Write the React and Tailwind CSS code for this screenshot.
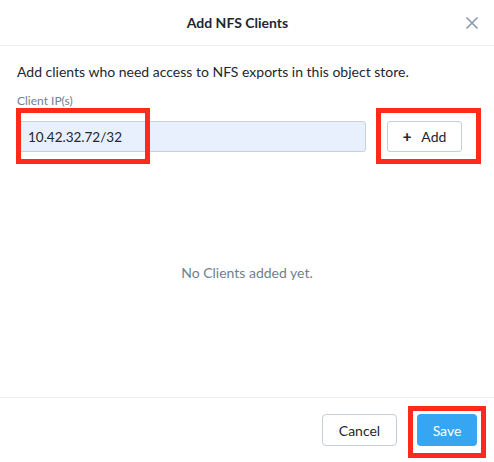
import React from "react";

const FONT = "font-['Lato','Open_Sans',sans-serif]";

function CloseIcon() {
  return (
    <svg width="12" height="12" viewBox="0 0 12 12" className="shrink-0">
      <path d="M1 1 L11 11 M11 1 L1 11" stroke="#8a9aab" strokeWidth="1.7" strokeLinecap="round" />
    </svg>
  );
}

export default function App() {
  return (
    <div className={`relative w-[494px] h-[462px] bg-white flex flex-col text-[#22272e] ${FONT}`}>
      <div className="h-[46px] shrink-0 border-b border-[#eceff2] flex items-center pr-[16px]">
        <div className="flex-1 text-center text-[14px] font-bold pl-[9px]">Add NFS Clients</div>
        <CloseIcon />
      </div>

      <div className="flex-1 flex flex-col px-[17px] pt-[17px]">
        <p className="text-[14px] leading-[18px]">Add clients who need access to NFS exports in this object store.</p>
        <label className="mt-[13px] text-[12px] leading-[14px] text-[#6f8193]">Client IP(s)</label>
        <div className="mt-[13px] flex items-center gap-[21px]">
          <input
            defaultValue="10.42.32.72/32"
            className="w-[349px] h-[31px] rounded-[3px] border border-[#c9d2db] bg-[#e8f0fe] px-[10px] text-[13.5px] text-[#22272e] outline-none"
          />
          <button className="w-[75px] h-[31px] rounded-[3px] border border-[#c6cdd5] bg-white flex items-center justify-center gap-[10px] text-[14px] text-[#22272e]">
            <span className="font-black text-[15px] leading-none">+</span>
            <span>Add</span>
          </button>
        </div>
        <div className="flex-1 flex items-center justify-center pb-[4px] text-[14px] text-[#6f7f8f]">
          No Clients added yet.
        </div>
      </div>

      <div className="h-[65px] shrink-0 border-t border-[#eceff2] flex items-center justify-end gap-[20px] pr-[17px]">
        <button className="w-[75px] h-[32px] rounded-[4px] border border-[#c6cdd5] bg-white text-[14px] text-[#22272e]">Cancel</button>
        <button className="w-[60px] h-[32px] rounded-[4px] bg-[#36a6f2] text-[14px] text-white">Save</button>
      </div>

      {/* annotation boxes drawn over the dialog */}
      <div className="absolute left-[16px] top-[108px] w-[134px] h-[56px] border-[5px] border-[#ff2a1c] pointer-events-none" />
      <div className="absolute left-[376px] top-[108px] w-[105px] h-[56px] border-[5px] border-[#ff2a1c] pointer-events-none" />
      <div className="absolute left-[408px] top-[406px] w-[78px] h-[52px] border-[5px] border-[#ff2a1c] pointer-events-none" />
    </div>
  );
}
